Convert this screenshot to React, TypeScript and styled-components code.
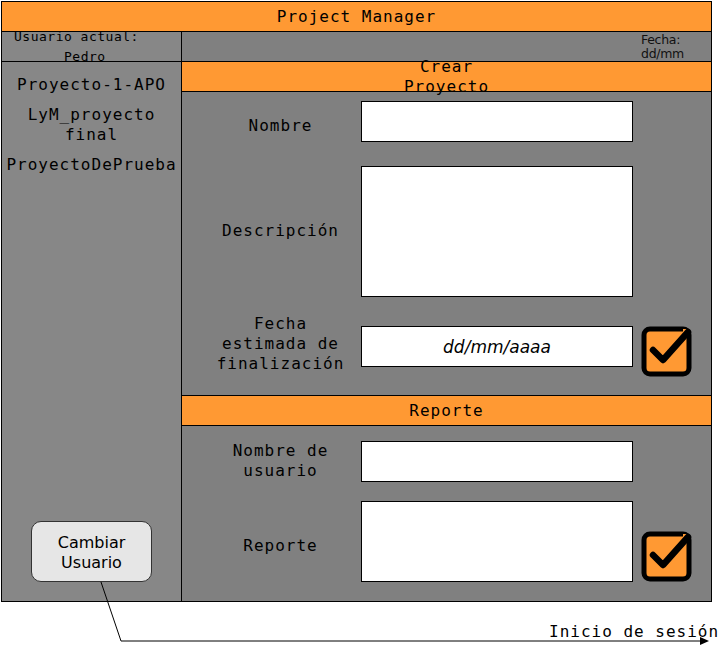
import React from 'react';
import styled, { createGlobalStyle } from 'styled-components';

const ORANGE = '#ff9933';
const GRAY = '#808080';
const SIDE = '#878787';
const MONO = `"DejaVu Sans Mono", "Liberation Mono", monospace`;
const SANS = `"DejaVu Sans", Verdana, sans-serif`;

const Global = createGlobalStyle`
  html, body { margin: 0; padding: 0; background: #fff; }
  body { width: 725px; height: 652px; overflow: hidden; font-family: ${MONO}; color: #000; }
  * { box-sizing: border-box; }
`;

const Page = styled.div`
  position: relative;
  width: 725px;
  height: 652px;
  padding: 1px 0 0 1px;
`;

const Frame = styled.div`
  width: 711px;
  height: 601px;
  border: 1px solid #000;
  display: flex;
  flex-direction: column;
`;

const Bar = styled.div<{ $top?: boolean }>`
  height: ${(p) => (p.$top ? 31 : 30)}px;
  flex: none;
  background: ${ORANGE};
  border-bottom: 1px solid #000;
  border-top: ${(p) => (p.$top ? '1px solid #000' : 'none')};
  display: flex;
  align-items: center;
  justify-content: center;
  text-align: center;
  font-size: 16px;
  line-height: 20px;
  letter-spacing: 1px;
  white-space: nowrap;
`;

const Body = styled.div`
  flex: 1;
  display: flex;
  min-height: 0;
`;

const Sidebar = styled.aside`
  width: 180px;
  flex: none;
  background: ${SIDE};
  border-right: 1px solid #000;
  display: flex;
  flex-direction: column;
`;

const InfoCell = styled.div`
  height: 30px;
  flex: none;
  border-bottom: 1px solid #000;
  overflow: hidden;
  display: flex;
  flex-direction: column;
  justify-content: center;
`;

const UserLabel = styled.div<{ $indent: number }>`
  font-size: 13px;
  line-height: 20px;
  letter-spacing: 0.5px;
  white-space: nowrap;
  padding-left: ${(p) => p.$indent}px;
`;

const ProjectList = styled.ul`
  list-style: none;
  margin: 0;
  padding: 13px 0 0;
  display: flex;
  flex-direction: column;
  gap: 10px;
`;

const Project = styled.li`
  font-size: 16px;
  line-height: 20px;
  letter-spacing: 1px;
  text-align: center;
  padding: 0 1px;
`;

const SwitchButton = styled.button`
  margin: auto auto 19px;
  width: 121px;
  height: 61px;
  border: 1px solid #333;
  border-radius: 10px;
  background: #e6e6e6;
  font-family: "Comic Sans MS", ${SANS};
  font-size: 16px;
  line-height: 20px;
  color: #000;
  padding: 3px 0 0;
`;

const Main = styled.main`
  flex: 1;
  background: ${GRAY};
  display: flex;
  flex-direction: column;
`;

const DateCell = styled(InfoCell)`
  align-items: flex-end;
  justify-content: flex-start;
`;

const DateText = styled.div`
  width: 70px;
  font-family: ${SANS};
  font-size: 12.5px;
  letter-spacing: -0.3px;
  line-height: 14px;
  padding-top: 1px;
  color: #111;
`;

const Section = styled.section<{ $pt: number; $pb: number }>`
  padding: ${(p) => p.$pt}px 0 ${(p) => p.$pb}px 18px;
  display: flex;
  flex-direction: column;
`;

const Line = styled.div<{ $gap?: number; $align?: string }>`
  display: flex;
  align-items: ${(p) => p.$align || 'flex-start'};
  margin-top: ${(p) => p.$gap || 0}px;
`;

const Field = styled.div<{ $h: number }>`
  display: flex;
  height: ${(p) => p.$h}px;
`;

const Label = styled.div<{ $dy: number }>`
  width: 161px;
  height: 100%;
  display: flex;
  align-items: center;
  justify-content: center;
  text-align: center;
  font-size: 16px;
  line-height: 20px;
  letter-spacing: 1px;
  padding-top: ${(p) => Math.max(0, p.$dy * 2)}px;
  padding-bottom: ${(p) => Math.max(0, -p.$dy * 2)}px;
`;

const Box = styled.div`
  width: 272px;
  height: 100%;
  background: #fff;
  border: 1px solid #000;
  display: flex;
  align-items: center;
  justify-content: center;
  font-family: ${SANS};
  font-style: italic;
  font-size: 17px;
`;

const CheckWrap = styled.div`
  width: 51px;
  height: 51px;
  margin-left: 8px;
  flex: none;
`;

const Caption = styled.div`
  margin-top: 20px;
  padding-left: 548px;
  font-size: 16px;
  line-height: 20px;
  letter-spacing: 1px;
  white-space: nowrap;
`;

const Connector = styled.svg`
  position: absolute;
  left: 0;
  top: 0;
  pointer-events: none;
`;

const Check = () => (
  <CheckWrap>
    <svg width="51" height="51" viewBox="0 0 51 51">
      <rect x="3" y="3" width="45" height="45" rx="6" fill={ORANGE} stroke="#000" strokeWidth="5" />
      <path d="M38 3 H42 V7 H48 V3 Z" fill={ORANGE} />
      <path d="M12 24 L22 34 L47 6" fill="none" stroke="#000" strokeWidth="6.5" strokeLinecap="round" strokeLinejoin="round" />
    </svg>
  </CheckWrap>
);

export default function App() {
  return (
    <Page>
      <Global />
      <Frame>
        <Bar>Project Manager</Bar>
        <Body>
          <Sidebar>
            <InfoCell>
              <UserLabel $indent={12}>Usuario actual:</UserLabel>
              <UserLabel $indent={62}>Pedro</UserLabel>
            </InfoCell>
            <ProjectList>
              <Project>Proyecto-1-APO</Project>
              <Project>LyM_proyecto final</Project>
              <Project>ProyectoDePrueba</Project>
            </ProjectList>
            <SwitchButton>
              Cambiar
              <br />
              Usuario
            </SwitchButton>
          </Sidebar>
          <Main>
            <DateCell>
              <DateText>
                Fecha:
                <br />
                dd/mm
              </DateText>
            </DateCell>
            <Bar>
              <span>
                Crear
                <br />
                Proyecto
              </span>
            </Bar>
            <Section $pt={9} $pb={18}>
              <Line>
                <Field $h={41}>
                  <Label $dy={4}>Nombre</Label>
                  <Box />
                </Field>
              </Line>
              <Line $gap={24}>
                <Field $h={131}>
                  <Label $dy={-1}>Descripción</Label>
                  <Box />
                </Field>
              </Line>
              <Line $gap={29}>
                <Field $h={41}>
                  <Label $dy={-3}>
                    Fecha
                    <br />
                    estimada de
                    <br />
                    finalización
                  </Label>
                  <Box>dd/mm/aaaa</Box>
                </Field>
                <Check />
              </Line>
            </Section>
            <Bar $top>Reporte</Bar>
            <Section $pt={15} $pb={19}>
              <Line>
                <Field $h={41}>
                  <Label $dy={-1}>
                    Nombre de
                    <br />
                    usuario
                  </Label>
                  <Box />
                </Field>
              </Line>
              <Line $gap={19} $align="flex-end">
                <Field $h={81}>
                  <Label $dy={4}>Reporte</Label>
                  <Box />
                </Field>
                <Check />
              </Line>
            </Section>
          </Main>
        </Body>
      </Frame>
      <Caption>Inicio de sesión</Caption>
      <Connector width="725" height="652" viewBox="0 0 725 652">
        <path d="M101 582 L121 641 L702 641" fill="none" stroke="#000" strokeWidth="1" />
        <polygon points="700,637 709,641 700,645" fill="#000" />
      </Connector>
    </Page>
  );
}
